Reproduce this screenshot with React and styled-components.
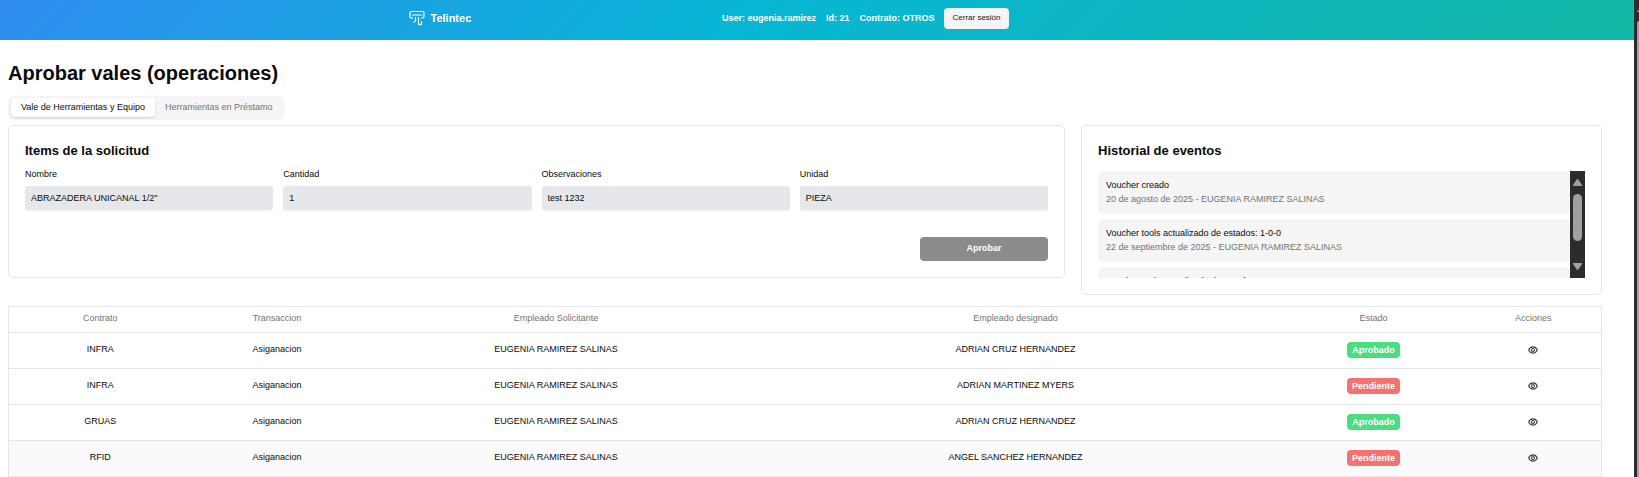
import React, { useId } from "react";
import styled, { createGlobalStyle } from "styled-components";

const Global = createGlobalStyle`
  *, *::before, *::after { box-sizing: border-box; }
  html, body { margin: 0; background: #fff; }
  body {
    font-family: "Liberation Sans", Arial, sans-serif;
    font-size: 9px;
    line-height: 13px;
    color: #0a0a0a;
  }
  html, body, #root { height: 100%; }
  h1, h2, p, ul { margin: 0; padding: 0; }
  button, input { font: inherit; }
`;

const Shell = styled.div`
  display: flex;
  height: 100vh;
  overflow: hidden;
`;

const Page = styled.div`
  flex: 1;
  min-width: 0;
`;

const Header = styled.header`
  height: 40px;
  padding: 0 0 4px 25%;
  display: flex;
  align-items: center;
  color: #fff;
  background: linear-gradient(135deg, #2f8cf0, #08b6d6 45%, #14b8a6);
`;

const HeaderContent = styled.div`
  flex: 0 1 600px;
  display: flex;
  align-items: center;
  justify-content: space-between;
`;

const Brand = styled.a`
  display: flex;
  align-items: center;
  gap: 6px;
  color: inherit;
  text-decoration: none;
  font-size: 11px;
  font-weight: 700;
`;

const Session = styled.div`
  display: flex;
  align-items: center;
  gap: 10px;
  font-weight: 700;
`;

const LogoutButton = styled.button`
  height: 21px;
  padding: 0 8px 2px;
  border: 0;
  border-radius: 4px;
  background: #f5f5f5;
  color: #171717;
  font-size: 8px;
  font-weight: 400;
`;

const Main = styled.main`
  padding: 20px 32px 0 8px;
`;

const Title = styled.h1`
  font-size: 20px;
  line-height: 27px;
`;

const TabList = styled.div`
  display: inline-flex;
  height: 24px;
  margin-top: 9px;
  padding: 2px 3px 3px;
  border-radius: 6px;
  background: #f5f5f5;
  vertical-align: top;
`;

const Tab = styled.button`
  padding: 0 10px 1px;
  border: 0;
  border-radius: 4px;
  background: ${(p) => (p.$active ? "#fff" : "transparent")};
  color: ${(p) => (p.$active ? "#0a0a0a" : "#737373")};
  box-shadow: ${(p) => (p.$active ? "0 1px 2px rgba(0, 0, 0, 0.15)" : "none")};
`;

const Panels = styled.div`
  display: grid;
  grid-template-columns: minmax(0, 1057fr) minmax(0, 521fr);
  gap: 16px;
  align-items: start;
  margin-top: 5px;
`;

const Card = styled.section`
  padding: 16px;
  border: 1px solid #e5e5e5;
  border-radius: 5px;
`;

const CardTitle = styled.h2`
  font-size: 13px;
  line-height: 17px;
`;

const Fields = styled.div`
  display: grid;
  grid-template-columns: repeat(4, minmax(0, 1fr));
  gap: 10px;
  margin-top: 9px;
`;

const FieldBox = styled.div`
  display: flex;
  flex-direction: column;
  gap: 5px;
`;

const Input = styled.input`
  width: 100%;
  height: 24px;
  padding: 0 6px 1px;
  border: 0;
  border-radius: 3px;
  background: #e5e7eb;
  color: #0a0a0a;
  box-shadow: 0 1px 1px rgba(0, 0, 0, 0.06);
`;

const Actions = styled.div`
  display: flex;
  justify-content: flex-end;
  margin-top: 27px;
`;

const ApproveButton = styled.button`
  width: 128px;
  height: 24px;
  padding: 0 0 2px;
  border: 0;
  border-radius: 4px;
  background: #8b8b8b;
  color: #fff;
  font-weight: 700;
`;

const HistoryBox = styled.div`
  display: flex;
  height: 107px;
  margin-top: 12px;
`;

const Events = styled.ul`
  flex: 1;
  min-width: 0;
  overflow: hidden;
  display: flex;
  flex-direction: column;
  gap: 5px;
  list-style: none;
`;

const Event = styled.li`
  flex: none;
  padding: 7px 8px 8px;
  border-radius: 5px;
  background: #f5f5f5;
  line-height: 14px;
`;

const EventMeta = styled.p`
  color: #737373;
`;

const Scrollbar = styled.div`
  width: 15px;
  padding: 8px 3px;
  display: flex;
  flex-direction: column;
  background: #2c2c2c;
`;

const Thumb = styled.div`
  height: 47px;
  margin: 8px 0 auto;
  border-radius: 5px;
  background: #9f9f9f;
`;

const PageScrollbar = styled.div`
  flex: none;
  width: 5px;
  padding: 9px 0 0 3px;
  background: #2c2c2c;
  display: flex;
  flex-direction: column;
`;

const PageThumb = styled.div`
  flex: 1;
  margin-top: 9px;
  border-top-left-radius: 2px;
  background: #9f9f9f;
`;

const Table = styled.table`
  width: 100%;
  margin-top: 11px;
  border-collapse: collapse;
  table-layout: fixed;
  border: 1px solid #e5e5e5;
  text-align: center;
`;

const Row = styled.tr`
  height: ${(p) => (p.$head ? 26 : 36)}px;
  background: ${(p) => (p.$hover ? "#fafafa" : "transparent")};
  border-bottom: 1px solid #e5e5e5;
`;

const HeadCell = styled.th`
  padding: 0 0 2px;
  color: #737373;
  font-weight: 400;
`;

const Cell = styled.td`
  padding: 0 0 2px;
`;

const Badge = styled.span`
  display: inline-block;
  height: 16px;
  padding: 0 5px;
  border-radius: 4px;
  background: ${(p) => (p.$ok ? "#4ade80" : "#f87171")};
  color: #fff;
  font-weight: 700;
  line-height: 16px;
  vertical-align: middle;
`;

const IconButton = styled.button`
  display: inline-flex;
  padding: 0;
  border: 0;
  background: none;
  color: #404040;
  vertical-align: middle;
`;

const Logo = () => (
  <svg width="16" height="16" viewBox="0 0 16 16" fill="none" stroke="currentColor" strokeWidth="1.2" strokeLinecap="round" strokeLinejoin="round" aria-hidden="true">
    <path d="M3.500 8H2.800Q1 8 1 6.500V2.800Q1 1.500 2.500 1.500H13.500Q15 1.500 15 2.800V6.500Q15 8 13.200 8H12.500" />
    <path d="M3.500 5H12.500" />
    <path d="M6.500 7.500V10.500Q6.500 12 4.800 12" />
    <path d="M9.500 7.500V13Q9.500 15 11 15T12.500 13V11.500" />
  </svg>
);

const Eye = () => (
  <svg width="10" height="10" viewBox="0 0 24 24" fill="none" stroke="currentColor" strokeWidth="2.600" strokeLinecap="round" strokeLinejoin="round" aria-hidden="true">
    <path d="M1.500 12s3.500-7.500 10.500-7.500S22.500 12 22.500 12s-3.500 7.500-10.500 7.500S1.500 12 1.500 12Z" />
    <circle cx="12" cy="12" r="3.500" />
  </svg>
);

const Arrow = ({ down }) => (
  <svg width="9" height="7" viewBox="0 0 9 7" fill="#9f9f9f" aria-hidden="true">
    <path d={down ? "M0 0H9V1L5.500 6.300Q4.500 7.500 3.500 6.300L0 1Z" : "M0 7H9V6L5.500 .7Q4.500-.5 3.500 .7L0 6Z"} />
  </svg>
);

function Field({ label, value }) {
  const id = useId();
  return (
    <FieldBox>
      <label htmlFor={id}>{label}</label>
      <Input id={id} readOnly value={value} />
    </FieldBox>
  );
}

const fields = [
  ["Nombre", 'ABRAZADERA UNICANAL 1/2"'],
  ["Cantidad", "1"],
  ["Observaciones", "test 1232"],
  ["Unidad", "PIEZA"],
];

const events = [
  ["Voucher creado", "20 de agosto de 2025 - EUGENIA RAMIREZ SALINAS"],
  ["Voucher tools actualizado de estados: 1-0-0", "22 de septiembre de 2025 - EUGENIA RAMIREZ SALINAS"],
  ["Voucher tools actualizado de estados: 1-1-0", "22 de septiembre de 2025 - EUGENIA RAMIREZ SALINAS"],
];

const columns = [
  ["Contrato", 183],
  ["Transaccion", 171],
  ["Empleado Solicitante", 387],
  ["Empleado designado", 532],
  ["Estado", 184],
  ["Acciones", 136],
];

const rows = [
  ["INFRA", "ADRIAN CRUZ HERNANDEZ", true],
  ["INFRA", "ADRIAN MARTINEZ MYERS", false],
  ["GRUAS", "ADRIAN CRUZ HERNANDEZ", true],
  ["RFID", "ANGEL SANCHEZ HERNANDEZ", false],
];

const totalWidth = columns.reduce((sum, c) => sum + c[1], 0);

export default function App() {
  return (
    <Shell>
      <Global />
      <Page>
        <Header>
          <HeaderContent>
            <Brand href="#">
              <Logo />
              Telintec
            </Brand>
            <Session>
              <span>User: eugenia.ramirez</span>
              <span>Id: 21</span>
              <span>Contrato: OTROS</span>
              <LogoutButton type="button">Cerrar sesión</LogoutButton>
            </Session>
          </HeaderContent>
        </Header>
        <Main>
          <Title>Aprobar vales (operaciones)</Title>
          <TabList role="tablist">
            <Tab type="button" role="tab" aria-selected="true" $active>Vale de Herramientas y Equipo</Tab>
            <Tab type="button" role="tab" aria-selected="false">Herramientas en Préstamo</Tab>
          </TabList>
          <Panels>
            <Card>
              <CardTitle>Items de la solicitud</CardTitle>
              <Fields>
                {fields.map(([label, value]) => (
                  <Field key={label} label={label} value={value} />
                ))}
              </Fields>
              <Actions>
                <ApproveButton type="button">Aprobar</ApproveButton>
              </Actions>
            </Card>
            <Card>
              <CardTitle>Historial de eventos</CardTitle>
              <HistoryBox>
                <Events>
                  {events.map(([title, meta]) => (
                    <Event key={title}>
                      <p>{title}</p>
                      <EventMeta>{meta}</EventMeta>
                    </Event>
                  ))}
                </Events>
                <Scrollbar aria-hidden="true">
                  <Arrow />
                  <Thumb />
                  <Arrow down />
                </Scrollbar>
              </HistoryBox>
            </Card>
          </Panels>
          <Table>
            <colgroup>
              {columns.map(([name, width]) => (
                <col key={name} style={{ width: `${(width / totalWidth) * 100}%` }} />
              ))}
            </colgroup>
            <thead>
              <Row $head>
                {columns.map(([name]) => (
                  <HeadCell key={name} scope="col">{name}</HeadCell>
                ))}
              </Row>
            </thead>
            <tbody>
              {rows.map(([contract, assignee, ok], i) => (
                <Row key={i} $hover={i === 3}>
                  <Cell>{contract}</Cell>
                  <Cell>Asiganacion</Cell>
                  <Cell>EUGENIA RAMIREZ SALINAS</Cell>
                  <Cell>{assignee}</Cell>
                  <Cell><Badge $ok={ok}>{ok ? "Aprobado" : "Pendiente"}</Badge></Cell>
                  <Cell>
                    <IconButton type="button" aria-label="Ver vale"><Eye /></IconButton>
                  </Cell>
                </Row>
              ))}
            </tbody>
          </Table>
        </Main>
      </Page>
      <PageScrollbar aria-hidden="true">
        <svg width="2" height="3" viewBox="0 0 2 3"><path d="M0 3L2 0V3Z" fill="#9f9f9f" /></svg>
        <PageThumb />
      </PageScrollbar>
    </Shell>
  );
}
